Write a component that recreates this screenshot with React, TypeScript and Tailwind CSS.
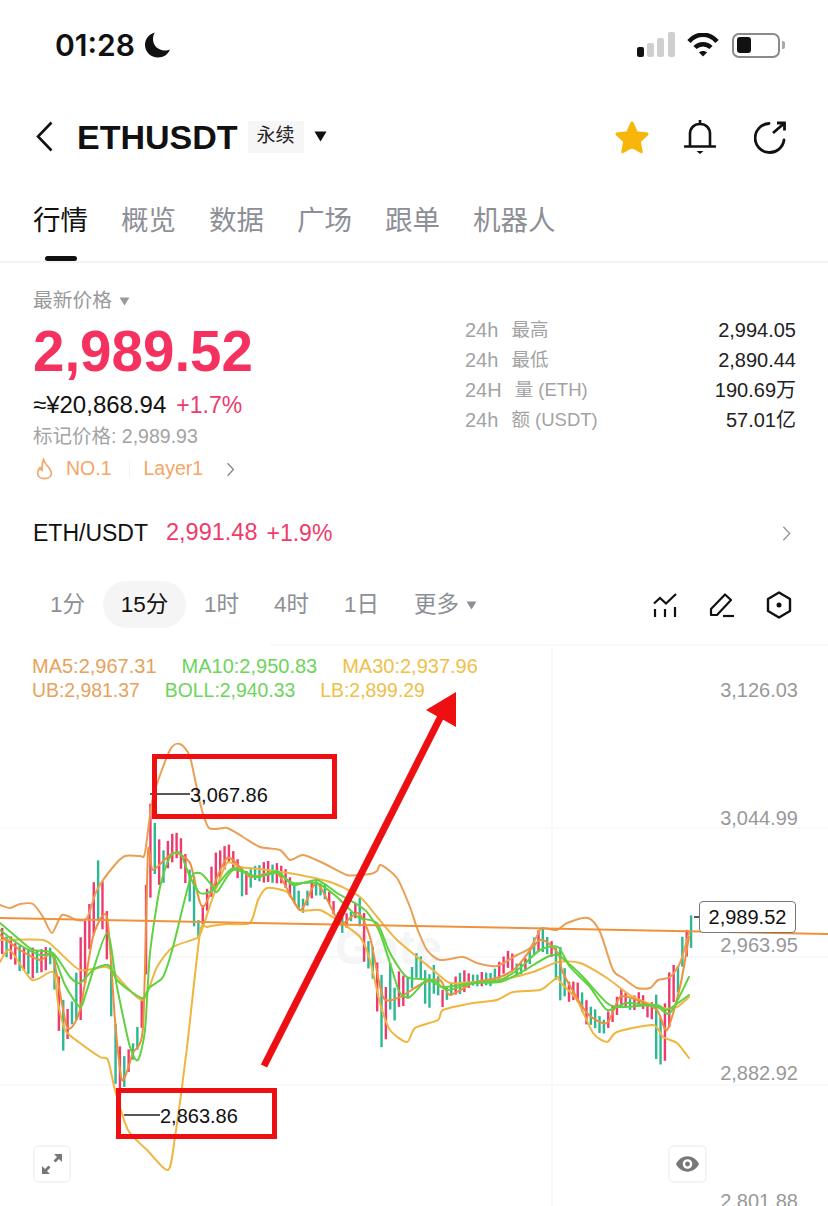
import React from 'react';

// key points of the candle range: x, top, bottom (page coordinates)
const ranges: number[][] = [
  [0, 927, 953], [17, 943, 973], [33, 947, 980], [50, 947, 967], [55, 953, 1003], [60, 997, 1055],
  [67, 1007, 1040], [73, 990, 1020], [80, 933, 1020], [87, 910, 953], [97, 860, 920], [103, 890, 933],
  [108, 930, 983], [114, 1022, 1083], [120, 1053, 1098], [127, 1047, 1077], [133, 1037, 1060], [140, 1007, 1037],
  [144, 923, 997], [147, 793, 920], [152, 817, 870], [160, 847, 890], [170, 833, 863], [177, 830, 860],
  [183, 847, 883], [193, 877, 927], [197, 917, 943], [203, 900, 923], [213, 853, 893], [227, 843, 863],
  [235, 853, 877], [242, 870, 902], [255, 863, 880], [270, 860, 887], [283, 867, 887], [295, 883, 912],
  [302, 897, 913], [312, 877, 897], [325, 883, 900], [335, 907, 920], [340, 917, 937], [350, 910, 923],
  [358, 893, 920], [360, 887, 960], [365, 932, 963], [372, 943, 983], [375, 960, 1003], [380, 973, 1047],
  [384, 997, 1050], [387, 953, 1003], [393, 983, 1022], [399, 967, 1010], [405, 977, 1005], [412, 960, 990],
  [417, 943, 973], [426, 970, 1015], [434, 960, 993], [441, 990, 1008], [452, 978, 995], [460, 967, 995],
  [470, 973, 987], [490, 970, 987], [502, 955, 977], [508, 947, 970], [516, 963, 977], [525, 957, 973],
  [533, 933, 957], [541, 927, 953], [550, 940, 957], [558, 943, 1000], [568, 980, 1003], [578, 982, 1003],
  [585, 997, 1025], [595, 1010, 1033], [603, 1017, 1037], [612, 1003, 1023], [620, 988, 1007], [630, 997, 1013],
  [640, 990, 1007], [645, 1003, 1017], [652, 1000, 1020], [656, 993, 1072], [660, 1022, 1063], [665, 997, 1060],
  [670, 957, 1007], [676, 967, 997], [680, 937, 977], [684, 935, 960], [689, 910, 950],
];

const tealAt = [17, 50, 60, 73, 97, 108, 114, 152, 193, 197, 242, 295, 340, 360, 380, 387, 412, 434, 516, 541, 558, 595, 656, 660, 680];

const rangeAt = (x: number) => {
  for (let i = 1; i < ranges.length; i++) {
    if (x <= ranges[i][0]) {
      const [x0, t0, b0] = ranges[i - 1];
      const [x1, t1, b1] = ranges[i];
      const k = (x - x0) / (x1 - x0);
      return [t0 + (t1 - t0) * k, b0 + (b1 - b0) * k];
    }
  }
  return [910, 950];
};

const candles = Array.from({ length: 159 }, (_, i) => {
  const x = 1 + i * 4.36;
  const [top, bottom] = rangeAt(x);
  const n = Math.abs(Math.sin(i * 12.9898) * 43758.5453) % 1;
  const m = Math.abs(Math.sin(i * 78.233) * 12543.37) % 1;
  const span = bottom - top;
  const teal = tealAt.some((t) => Math.abs(t - x) < 2.2) || (n > 0.6 && span < 45);
  const y1 = top + span * (span > 45 ? 0 : n * 0.18);
  const y2 = bottom - span * (span > 45 ? 0 : m * 0.18);
  return { x, y1, y2, color: teal ? '#2db894' : '#ef3a6e' };
});

// catmull-rom through the points, so the lines don't look angular
const smooth = (points: string) => {
  const p = points.split(' ').map((s) => s.split(',').map(Number));
  let d = `M${p[0][0]} ${p[0][1]}`;
  for (let i = 0; i < p.length - 1; i++) {
    const a = p[Math.max(i - 1, 0)];
    const b = p[i];
    const c = p[i + 1];
    const e = p[Math.min(i + 2, p.length - 1)];
    const t = 0.12;
    d += `C${b[0] + (c[0] - a[0]) * t} ${b[1] + (c[1] - a[1]) * t} ${c[0] - (e[0] - b[0]) * t} ${c[1] - (e[1] - b[1]) * t} ${c[0]} ${c[1]}`;
  }
  return d;
};

const ub = '0,905 10,908 20,904 33,904 43,917 52,933 62,915 77,920 87,918 97,890 113,867 125,856 140,856 145,853 153,797 170,750 180,744 190,757 200,803 209,828 227,828 243,837 260,847 280,850 290,860 303,855 323,863 347,875 358,875 370,874 377,871 381,865 397,878 410,907 417,928 427,950 440,960 463,957 477,963 497,966 517,955 530,948 540,930 543,928 557,930 567,923 588,918 600,932 613,970 623,978 637,988 650,988 658,980 670,977 680,963 689,933';
const lb = '0,962 10,950 32,980 53,972 58,1003 65,1030 80,1043 100,1057 108,1060 115,1090 128,1130 147,1150 168,1170 175,1137 187,1047 200,933 207,927 227,924 250,923 258,900 267,888 287,892 300,910 320,910 337,920 360,937 370,960 380,1003 390,1030 407,1042 415,1028 438,1020 443,1010 473,1003 497,1000 513,992 540,990 550,983 558,977 560,982 577,1000 593,1033 607,1042 617,1032 653,1025 663,1037 677,1043 689,1058';
const ma30 = '0,940 43,940 57,950 80,970 107,967 123,983 143,1000 157,967 173,947 197,938 203,927 213,897 227,863 240,867 267,870 300,875 333,883 360,897 378,918 397,940 433,970 450,983 473,982 500,980 533,972 558,962 580,963 607,978 633,997 663,1008 677,1007 689,997';
const greenA = '0,923 20,940 33,950 53,953 70,977 80,983 93,970 108,965 117,980 133,993 143,998 150,987 163,977 173,947 190,880 200,873 210,883 217,892 233,870 257,877 277,873 293,883 317,883 337,897 358,917 377,923 390,953 407,977 433,980 447,990 473,983 500,980 520,968 540,950 558,947 570,967 590,987 607,1010 627,1003 657,1007 670,1013 689,977';
const greenB = '0,930 20,945 40,955 53,955 65,985 80,1007 87,990 107,933 117,987 130,1047 138,1060 145,1030 150,953 160,887 170,857 180,853 190,877 200,893 213,890 233,868 257,877 277,871 293,885 317,880 337,893 358,905 367,912 380,933 393,973 400,993 410,997 427,980 443,987 473,983 500,982 520,973 547,957 558,955 567,962 583,977 607,1003 620,1007 657,1005 667,1010 689,995';
const ma5 = '0,935 20,950 40,960 53,957 67,1027 80,1010 93,937 107,917 115,1020 122,1080 133,1053 143,1027 148,853 153,870 173,853 190,863 203,907 227,858 250,877 277,873 300,910 317,883 340,923 358,913 370,937 383,997 400,997 423,983 440,980 450,995 473,983 500,977 517,967 540,940 558,953 563,973 587,1013 607,1023 620,997 637,1000 657,1010 667,1030 680,987 689,937';

const Caret = ({ className }: { className: string }) => (
  <svg viewBox="0 0 12 10" className={className} fill="currentColor">
    <path d="M0.5 0.5h11L6 9.5z" />
  </svg>
);

const Chevron = ({ className }: { className: string }) => (
  <svg viewBox="0 0 10 18" className={className} fill="none" stroke="currentColor" strokeWidth="1.6">
    <path d="M1.5 1.5L8.5 9L1.5 16.5" />
  </svg>
);

const StatRow = ({ period, label, value }: { period: string; label: string; value: string }) => (
  <div className="flex h-[30px] items-center text-[20px]">
    <span className="text-[#a3a3a3]">{period}</span>
    <span className="ml-[13px] text-[18.500px] text-[#a3a3a3]">{label}</span>
    <span className="ml-auto text-[#222]">{value}</span>
  </div>
);

const Chart = () => (
  <svg viewBox="0 640 828 566" className="absolute inset-0 h-full w-full" fill="none">
    <path d="M270 645H828M0 828H828M0 957H828M0 1085H828M552 645V1206" stroke="#f8f8f8" strokeWidth="1.5" />
    {candles.map((c) => (
      <rect key={c.x} x={c.x} y={c.y1} width="2.4" height={c.y2 - c.y1} fill={c.color} />
    ))}
    <g strokeWidth="2" strokeLinejoin="round" strokeLinecap="round">
      <path d={smooth(lb)} stroke="#f0b53c" />
      <path d={smooth(ub)} stroke="#eb9f55" />
      <path d={smooth(ma30)} stroke="#eeb644" />
      <path d={smooth(ma5)} stroke="#ef8f3d" />
      <path d={smooth(greenA)} stroke="#60d140" />
      <path d={smooth(greenB)} stroke="#60d140" />
    </g>
    <path d="M0 918L828 934" stroke="#f0923c" strokeWidth="2" />
    <path d="M150 794H190M124 1115H160M694 917H699" stroke="#222" strokeWidth="1.4" />
    <g stroke="#ee0f12" strokeWidth="5">
      <rect x="154.5" y="756.5" width="180" height="60" />
      <rect x="118.5" y="1090.5" width="156" height="46" />
    </g>
    <path d="M264 1066L441 716" stroke="#ee0f12" strokeWidth="7" />
    <path d="M456 692L426 710L456 727z" fill="#ee0f12" />
  </svg>
);

export default function App() {
  return (
    <div
      className="flex h-[1206px] w-[828px] flex-col overflow-hidden bg-white text-[#111]"
      style={{ fontFamily: '"Liberation Sans", "Noto Sans CJK SC", sans-serif' }}
    >
      {/* status bar */}
      <div className="flex h-[90px] shrink-0 items-center pl-[55px] pr-[43px]">
        <span className="font-['Inter'] text-[30px] font-semibold leading-none">01:28</span>
        <svg viewBox="0 0 28 28" className="ml-[9px] h-[28px] w-[28px]" fill="#111">
          <path d="M11 1.500C5 3 1 8 1 14c0 7 6 12.500 13 12.500 5.500 0 10-3 12-8-1.500.7-3.500 1-5 1-7 0-12-5-12-11.500 0-2.500.7-4.800 2-7z" />
        </svg>
        <svg viewBox="0 0 38 26" className="ml-auto h-[26px] w-[38px]">
          <rect x="0" y="15" width="7" height="10" rx="2" fill="#111" />
          <rect x="10" y="11" width="7" height="14" rx="2" fill="#cfcfcf" />
          <rect x="20" y="6" width="7" height="19" rx="2" fill="#cfcfcf" />
          <rect x="31" y="0" width="7" height="25" rx="2" fill="#cfcfcf" />
        </svg>
        <svg viewBox="0 0 32 24" className="ml-[12px] h-[24px] w-[32px]" fill="none" stroke="#111" strokeWidth="4.500">
          <path d="M2 8.500C10-.5 22-.5 30 8.500" />
          <path d="M8 14.500c4.500-4.500 11.500-4.500 16 0" />
          <path d="M16 23.500l-4-4c2-2 6-2 8 0z" fill="#111" stroke="none" />
        </svg>
        <div className="ml-[13px] flex items-center">
          <div className="flex h-[25px] w-[48px] items-center rounded-[7px] border-2 border-[#8a8a8a] px-[3px]">
            <div className="h-[16px] w-[14px] rounded-[3px] bg-[#111]" />
          </div>
          <div className="ml-[2px] h-[8px] w-[3px] rounded-r-[2px] bg-[#a8a8a8]" />
        </div>
      </div>

      {/* header */}
      <div className="flex h-[84px] shrink-0 items-center pl-[36px] pr-[40px] pt-[9px]">
        <svg viewBox="0 0 17 31" className="h-[31px] w-[17px]" fill="none" stroke="#111" strokeWidth="2.600">
          <path d="M15.500 1.500L2 15.500L15.500 29.500" />
        </svg>
        <span className="ml-[24px] text-[34px] font-bold leading-none">ETHUSDT</span>
        <span className="ml-[10px] flex h-[32px] w-[56px] items-center justify-center bg-[#f6f6f6] text-[19px] text-[#222]">永续</span>
        <Caret className="ml-[9px] h-[11px] w-[15px] text-[#111]" />
        <svg viewBox="0 0 36 34" className="ml-auto h-[34px] w-[36px]" fill="#f8b60b" stroke="#f8b60b" strokeWidth="3" strokeLinejoin="round">
          <path d="M18 3l4.500 9.800 10.500 1.300-7.800 7.200 2.100 10.400L18 26.500l-9.300 5.200 2.100-10.400L3 14.100l10.500-1.300z" />
        </svg>
        <svg viewBox="0 0 32 36" className="ml-[34px] h-[36px] w-[32px]" fill="none" stroke="#111" strokeWidth="2.600">
          <path d="M6 27V15C6 9 10 5 16 5s10 4 10 10v12" />
          <path d="M1 27.500h30" strokeLinecap="round" />
          <path d="M16 1v4" />
          <path d="M12.500 32h7l-3.500 3z" fill="#111" stroke="none" />
        </svg>
        <svg viewBox="0 0 34 34" className="ml-[38px] h-[34px] w-[34px]" fill="none" stroke="#111" strokeWidth="2.800">
          <path d="M15 3.500A14.500 14.500 0 1 0 30 20" strokeLinecap="round" />
          <path d="M19 13L30 3.500M23 3h7.500v7.500" />
        </svg>
      </div>

      {/* tabs */}
      <div className="flex h-[89px] shrink-0 gap-[33px] border-b-2 border-[#f4f4f4] pl-[33px] pt-[27px] text-[27.500px] leading-[40px] text-[#8c9096]">
        <div className="flex flex-col items-center text-[#111]">
          <span>行情</span>
          <div className="mt-[15px] h-[5px] w-[32px] rounded-full bg-[#111]" />
        </div>
        <span>概览</span>
        <span>数据</span>
        <span>广场</span>
        <span>跟单</span>
        <span>机器人</span>
      </div>

      {/* price block */}
      <div className="flex h-[250px] shrink-0 px-[32px]">
        <div className="flex flex-col pl-[1px] pt-[24px]">
          <div className="flex h-[28px] items-center text-[19.750px] text-[#999]">
            最新价格
            <Caret className="ml-[7px] h-[9px] w-[11px] text-[#9a9a9a]" />
          </div>
          <div className="mt-[6px] h-[62px] text-[56.500px] font-bold leading-[62px] text-[#f5325f]">2,989.52</div>
          <div className="mt-[7px] flex h-[30px] items-center text-[24px]">
            ≈¥20,868.94
            <span className="ml-[10px] text-[23px] text-[#ef3a6e]">+1.7%</span>
          </div>
          <div className="mt-[2px] flex h-[30px] items-center text-[19.500px] text-[#a3a3a3]">标记价格: 2,989.93</div>
          <div className="mt-[2px] flex h-[30px] items-center text-[19.500px] text-[#f5a566]">
            <svg viewBox="0 0 18 24" className="ml-[3px] h-[22px] w-[17px]" fill="none" stroke="#f5a566" strokeWidth="1.800">
              <path d="M8 1.500c1 4 2.500 5 4.500 7.500 2.500 3 4 5 4 8 0 3.500-3.500 5.500-7.500 5.500S1.500 20.500 1.500 17c0-3 1-5 2.500-6.500.5 1.500 1.500 2.500 2.500 3C6 9 6.500 5 8 1.500z" />
            </svg>
            <span className="ml-[13px]">NO.1</span>
            <div className="ml-[17px] h-[17px] w-px bg-[#f4f4f4]" />
            <span className="ml-[14px]">Layer1</span>
            <Chevron className="ml-[23px] h-[15px] w-[9px] text-[#888]" />
          </div>
        </div>
        <div className="ml-auto w-[331px] pt-[52px]">
          <StatRow period="24h" label="最高" value="2,994.05" />
          <StatRow period="24h" label="最低" value="2,890.44" />
          <StatRow period="24H" label="量 (ETH)" value="190.69万" />
          <StatRow period="24h" label="额 (USDT)" value="57.01亿" />
        </div>
      </div>

      {/* spot row */}
      <div className="flex h-[40px] shrink-0 items-center pl-[33px] pr-[37px] text-[23px]">
        <span>ETH/USDT</span>
        <span className="ml-[18px] text-[23.500px] text-[#ee3b6b]">2,991.48</span>
        <span className="ml-[9px] text-[#ee3b6b]">+1.9%</span>
        <Chevron className="ml-auto h-[17px] w-[9px] text-[#999]" />
      </div>

      {/* intervals */}
      <div className="mt-[28px] flex h-[47px] shrink-0 items-center gap-px pl-[33px] pr-[36px] pt-px text-[22.500px] text-[#8c9096]">
        <span className="px-[17px]">1分</span>
        <span className="-mt-px flex h-[47px] w-[83px] items-center justify-center rounded-[24px] bg-[#f5f5f5] text-[#111]">15分</span>
        <span className="px-[17px]">1时</span>
        <span className="px-[17px]">4时</span>
        <span className="px-[17px]">1日</span>
        <span className="flex items-center pl-[17px]">
          更多
          <Caret className="ml-[7px] h-[9px] w-[11px] text-[#8c9096]" />
        </span>
        <svg viewBox="0 0 24 24" className="ml-auto h-[24px] w-[24px]" fill="none" stroke="#111" strokeWidth="2.200">
          <path d="M1 10.500L7 5l6 5.500L23 1" />
          <path d="M2 16v8M12 16v8M22 14v10" />
        </svg>
        <svg viewBox="0 0 26 26" className="ml-[31px] h-[26px] w-[26px]" fill="none" stroke="#111" strokeWidth="2.200" strokeLinejoin="round">
          <path d="M2 23V17L16 2.500l6 5.500L8 23z" />
          <path d="M14 24h11" />
        </svg>
        <svg viewBox="0 0 26 28" className="ml-[30px] h-[28px] w-[26px]" fill="none" stroke="#111" strokeWidth="2.400" strokeLinejoin="round">
          <path d="M13 1.500L24 8v12l-11 6.500L2 20V8z" />
          <circle cx="13" cy="14" r="2.500" fill="#111" stroke="none" />
        </svg>
      </div>

      {/* chart */}
      <div className="relative mt-[12px] min-h-0 flex-1 overflow-hidden">
        <span className="absolute left-[335px] top-[284px] text-[48px] font-bold leading-none text-[#f3f5f6]">Gate</span>
        <Chart />
        <div className="absolute left-[32px] top-[14px] leading-[24px]">
          <div className="flex gap-[25px] text-[20px]">
            <span className="text-[#e8a25c]">MA5:2,967.31</span>
            <span className="text-[#6dd45a]">MA10:2,950.83</span>
            <span className="text-[#eec04a]">MA30:2,937.96</span>
          </div>
          <div className="flex gap-[25px] text-[19.400px]">
            <span className="text-[#e8a25c]">UB:2,981.37</span>
            <span className="text-[#6dd45a]">BOLL:2,940.33</span>
            <span className="text-[#eec04a]">LB:2,899.29</span>
          </div>
        </div>
        <div className="absolute right-[30px] top-[36px] flex flex-col gap-[99.700px] text-[20px] leading-[28px] text-[#999]">
          <span>3,126.03</span>
          <span>3,044.99</span>
          <span>2,963.95</span>
          <span>2,882.92</span>
          <span>2,801.88</span>
        </div>
        <span className="absolute left-[190px] top-[143px] text-[20px] leading-[24px] text-[#111]">3,067.86</span>
        <span className="absolute left-[160px] top-[464px] text-[20px] leading-[24px] text-[#111]">2,863.86</span>
        <div className="absolute left-[699px] top-[261px] flex h-[32px] w-[97px] items-center justify-center rounded-[4px] border border-[#777] bg-white text-[20px] text-[#111]">2,989.52</div>
        <div className="absolute left-[33px] top-[505px] flex h-[38px] w-[38px] items-center justify-center rounded-[6px] border-2 border-[#f4f4f4] bg-white">
          <svg viewBox="0 0 20 20" className="h-[20px] w-[20px]" fill="#777">
            <path d="M12 0h8v8l-3-3-3.500 3.500-2-2L15 3zM0 12l3 3 3.500-3.500 2 2L5 17l3 3H0z" />
          </svg>
        </div>
        <div className="absolute left-[668px] top-[505px] flex h-[38px] w-[39px] items-center justify-center rounded-[6px] border-2 border-[#f4f4f4] bg-white">
          <svg viewBox="0 0 24 16" className="h-[16px] w-[23px]" fill="#777">
            <path fillRule="evenodd" d="M12 0c5 0 9.500 3.200 12 8-2.500 4.800-7 8-12 8S2.500 12.800 0 8c2.500-4.800 7-8 12-8zm0 3a5 5 0 1 0 0 10 5 5 0 0 0 0-10zm0 2.500a2.500 2.500 0 1 1 0 5 2.500 2.500 0 0 1 0-5z" />
          </svg>
        </div>
      </div>
    </div>
  );
}
